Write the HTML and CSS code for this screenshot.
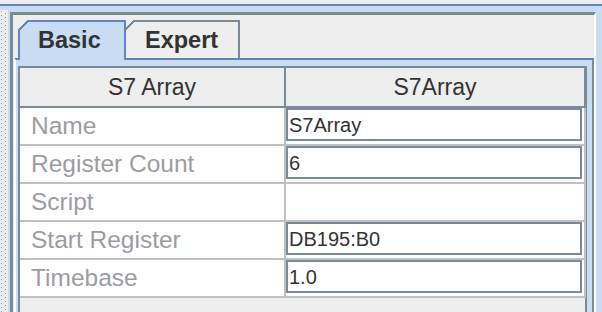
FILE: index.html
```html
<!DOCTYPE html>
<html>

<head>
    <meta name="viewport" content="width=device-width, initial-scale=1.0">
    <link rel="stylesheet" href="styles.css">
</head>

<body>
    <div class="top-gap"></div>
    <div class="frame">
        <div class="grip"></div>
        <div class="pane">
            <div class="tabs">
                <div class="tab tab-active">Basic</div>
                <div class="tab">Expert</div>
            </div>
            <div class="content">
                <div class="props">
                    <div class="head">S7 Array</div>
                    <div class="head">S7Array</div>

                    <div class="label">Name</div>
                    <div class="value"><div class="field">S7Array</div></div>

                    <div class="label">Register Count</div>
                    <div class="value"><div class="field">6</div></div>

                    <div class="label">Script</div>
                    <div class="value"></div>

                    <div class="label">Start Register</div>
                    <div class="value"><div class="field">DB195:B0</div></div>

                    <div class="label">Timebase</div>
                    <div class="value"><div class="field">1.0</div></div>
                </div>
            </div>
        </div>
    </div>
</body>

</html>
```

FILE: styles.css
```css
* {
    box-sizing: border-box;
}

body {
    margin: 0;
    background-color: #eeeeee;
    font-family: "Liberation Sans", Arial, sans-serif;
    overflow: hidden;
}

.top-gap {
    height: 4px;
}

.frame {
    display: flex;
    height: 308px;
    border-top: 2px solid #6382bf;
    background-color: #c8ddf2;
    padding-top: 4px;
}

/* splitter bumps */
.grip {
    width: 8px;
    flex-shrink: 0;
    background-color: #eeeeee;
    background-image:
        radial-gradient(circle at 1.5px 1.5px, #8a9aaa 0.9px, transparent 1px),
        radial-gradient(circle at 5.5px 3.5px, #8a9aaa 0.9px, transparent 1px);
    background-size: 8px 4px, 8px 4px;
}

.pane {
    width: 586px;
    margin: 2px 0 0 2px;
    border-top: 3px solid #7a8a99;
    border-left: 3px solid #7a8a99;
    border-right: 2px solid #ffffff;
    background-color: #eeeeee;
    display: flex;
    flex-direction: column;
}

/* tabs */
.tabs {
    display: flex;
    height: 43px;
    padding: 5px 0 0 5px;
}

.tab {
    position: relative;
    width: 114px;
    height: 38px;
    border-top: 2px solid #7a8a99;
    border-right: 2px solid #7a8a99;
    font-size: 23.5px;
    font-weight: bold;
    color: #333333;
    padding: 5px 0 0 19px;
}

.tab::before {
    content: "";
    position: absolute;
    top: -2px;
    left: -2px;
    width: 14px;
    height: 14px;
    background: linear-gradient(135deg, #eeeeee 0 7px, #7a8a99 7px 8.5px, transparent 8.5px);
}

.tab-active {
    width: 108px;
    height: 40px;
    z-index: 1;
    border: 2px solid #6382bf;
    border-bottom: none;
    background-color: #c8ddf2;
    padding-left: 18px;
}

.tab-active::before {
    background: linear-gradient(135deg, #eeeeee 0 7px, #6382bf 7px 8.5px, transparent 8.5px);
}

/* content */
.content {
    flex: 1;
    margin-left: 1px;
    border-top: 2px solid #6382bf;
    border-left: 2px solid #ffffff;
    border-right: 2px solid #7a8a99;
    background-color: #c8ddf2;
    padding: 6px 5px 0 2px;
}

.props {
    display: grid;
    grid-template-columns: 266px 300px;
    grid-template-rows: 40px;
    grid-auto-rows: 38px;
    height: 260px;
    border-top: 2px solid #7a8a99;
    border-left: 2px solid #7a8a99;
    border-right: 2px solid #7a8a99;
    background-color: #eeeeee;
}

.head {
    display: flex;
    align-items: center;
    justify-content: center;
    font-size: 23px;
    color: #333333;
    border-bottom: 2px solid #7a8a99;
    border-right: 2px solid #7a8a99;
    padding-top: 1px;
}

.label {
    display: flex;
    align-items: center;
    padding-left: 11px;
    font-size: 24.5px;
    color: #9c9ca4;
    background-color: white;
    border-bottom: 2px solid #c0c0c0;
    border-right: 2px solid #c0c0c0;
}

.value {
    background-color: white;
    border-bottom: 2px solid #c0c0c0;
    border-right: 2px solid #c0c0c0;
}

.field {
    height: 33px;
    margin-right: 2px;
    border: 2px solid #7a8a99;
    background-color: white;
    font-size: 20px;
    color: #333333;
    padding: 4px 0 0 1px;
}
```
